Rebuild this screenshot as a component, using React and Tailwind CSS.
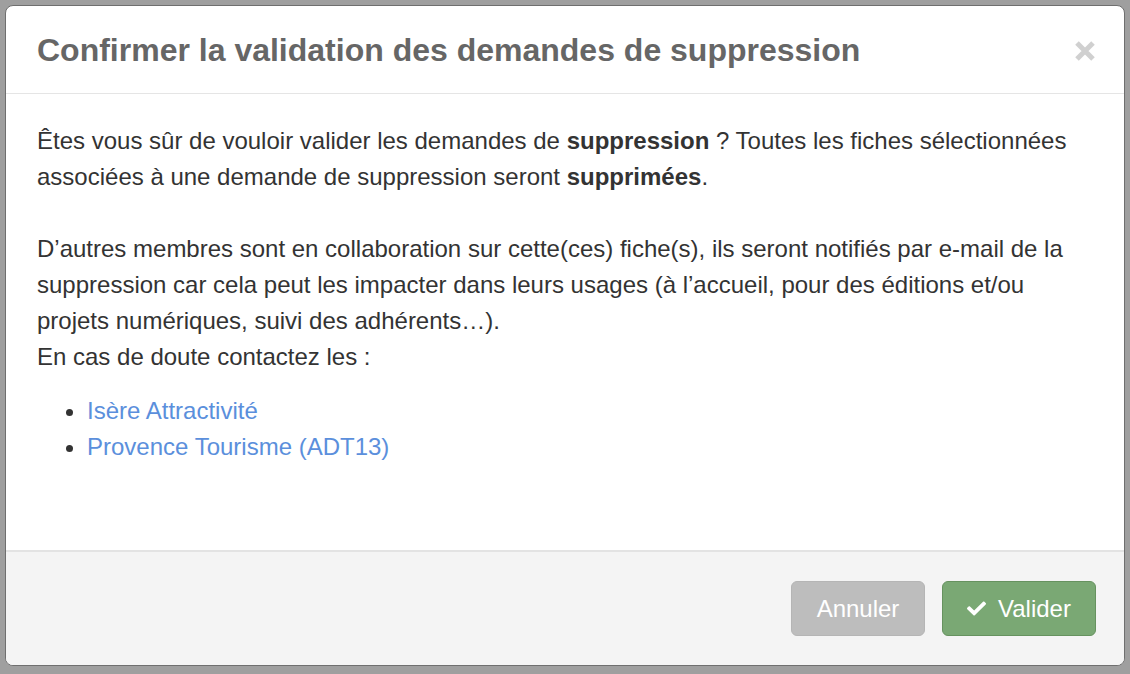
import { FaCheck } from 'react-icons/fa';

export default function App() {
  return (
    <div
      className="h-[674px] w-[1130px] bg-[#9f9f9f] p-[5px]"
      style={{ fontFamily: '"Liberation Sans", Arial, sans-serif' }}
    >
      <div className="flex h-[661px] flex-col overflow-hidden rounded-[8px] border border-[#6f6f6f] bg-white">
        {/* Header */}
        <div className="flex h-[88px] shrink-0 items-center justify-between border-b border-[#e5e5e5] pl-[31px] pr-[28px]">
          <h4 className="text-[32px] font-bold text-[#666666]">
            Confirmer la validation des demandes de suppression
          </h4>
          <svg width="22" height="22" viewBox="0 0 22 22" className="mt-[2px]">
            <path d="M3 3 L19 19 M19 3 L3 19" stroke="#d0d0d0" strokeWidth="5" />
          </svg>
        </div>

        {/* Body */}
        <div className="flex-1 px-[31px] pt-[29px] text-[24px] leading-[36px] text-[#333333]">
          <p className="whitespace-nowrap">
            Êtes vous sûr de vouloir valider les demandes de <b>suppression</b> ? Toutes les fiches sélectionnées
            <br />
            associées à une demande de suppression seront <b>supprimées</b>.
          </p>
          <p className="mt-[36px] whitespace-nowrap">
            D’autres membres sont en collaboration sur cette(ces) fiche(s), ils seront notifiés par e-mail de la
            <br />
            suppression car cela peut les impacter dans leurs usages (à l’accueil, pour des éditions et/ou
            <br />
            projets numériques, suivi des adhérents…).
            <br />
            En cas de doute contactez les :
          </p>
          <ul className="mt-[18px] list-disc pl-[50px] marker:text-[#333333]">
            <li>
              <a href="#" className="text-[#5b8fdc]">Isère Attractivité</a>
            </li>
            <li>
              <a href="#" className="text-[#5b8fdc]">Provence Tourisme (ADT13)</a>
            </li>
          </ul>
        </div>

        {/* Footer */}
        <div className="flex h-[115px] shrink-0 items-center justify-end gap-[17px] border-t-2 border-[#e3e3e3] bg-[#f4f4f4] pr-[28px]">
          <button className="h-[55px] w-[134px] rounded-[6px] border border-[#b5b5b5] bg-[#bdbdbd] text-[24px] text-white">
            Annuler
          </button>
          <button className="flex h-[55px] w-[154px] items-center justify-center gap-[12px] rounded-[6px] border border-[#66925f] bg-[#7aa874] text-[24px] text-white">
            <FaCheck className="h-[19px] w-[19px]" />
            Valider
          </button>
        </div>
      </div>
    </div>
  );
}
